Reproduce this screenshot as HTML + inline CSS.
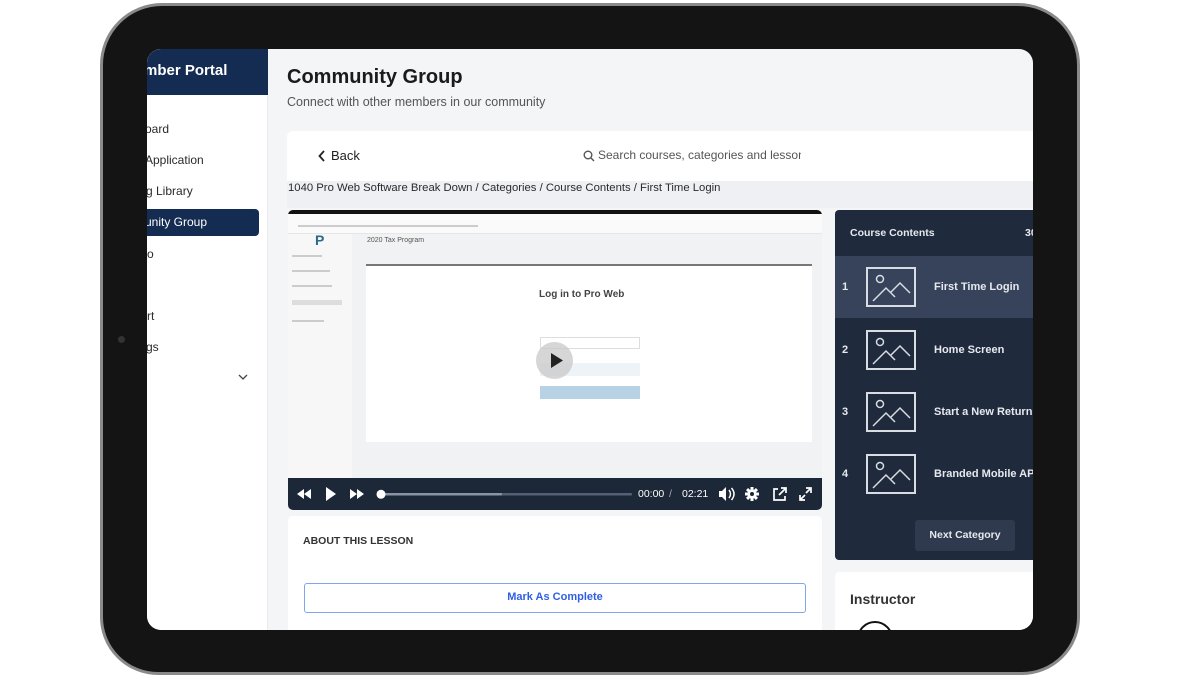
<!DOCTYPE html>
<html><head><meta charset="utf-8"><style>
*{margin:0;padding:0;box-sizing:border-box}
body{width:1200px;height:675px;background:#fff;position:relative;overflow:hidden;font-family:"Liberation Sans",Arial,sans-serif}
.a{position:absolute}
.frame{left:100px;top:3px;width:980px;height:672px;background:#141414;border:3px solid #8a8a8a;border-radius:62px 62px 58px 58px}
.screen{left:147px;top:49px;width:886px;height:581px;border-radius:14px;overflow:hidden;background:#f4f5f7}
.t{position:absolute;white-space:nowrap}
.nav{font-size:12px;color:#2a2a2a}
.th{position:absolute;left:31px;width:50px;height:40px;border:2px solid #d8dce3}
.row .n{position:absolute;left:7px;font-size:11px;color:#e6e9ee;font-weight:bold}
.row .l{position:absolute;left:99px;font-size:11px;color:#e6e9ee;font-weight:bold;white-space:nowrap}
</style></head><body>
<div class="a frame"></div>
<div class="a" style="left:118px;top:336px;width:7px;height:7px;border-radius:50%;background:#333"></div>
<div class="a screen">
  <div class="a" style="left:0;top:0;width:121px;height:581px;background:#fff;border-right:1px solid #e8eaee"></div>
  <div class="a" style="left:0;top:0;width:121px;height:46px;background:#142c52"></div>
  <div class="t" style="left:-3px;top:13px;color:#fff;font-size:15px;font-weight:bold">mber Portal</div>
  <div class="t nav" style="left:-2px;top:73px">oard</div>
  <div class="t nav" style="left:-2px;top:104px">Application</div>
  <div class="t nav" style="left:-1px;top:135px">g Library</div>
  <div class="a" style="left:0;top:160px;width:112px;height:27px;background:#142c52;border-radius:0 4px 4px 0"></div>
  <div class="t nav" style="left:-2px;top:166px;color:#fff">unity Group</div>
  <div class="t nav" style="left:0;top:198px">o</div>
  <div class="t nav" style="left:0;top:260px">rt</div>
  <div class="t nav" style="left:-1px;top:291px">gs</div>
  <svg class="a" style="left:91px;top:325px" width="10" height="7"><path d="M1 1l4 4 4-4" stroke="#444" stroke-width="1.3" fill="none"/></svg>
  <div class="t" style="left:140px;top:17px;font-size:20px;font-weight:bold;color:#1b1b1b">Community Group</div>
  <div class="t" style="left:140px;top:46px;font-size:12.5px;color:#555">Connect with other members in our community</div>
  <div class="a" style="left:140px;top:82px;width:760px;height:50px;background:#fff;border-radius:6px 0 0 0"></div>
  <svg class="a" style="left:171px;top:101px" width="8" height="12"><path d="M6 1L1.5 6 6 11" stroke="#222" stroke-width="1.8" fill="none"/></svg>
  <div class="t" style="left:184px;top:99px;font-size:13px;color:#222">Back</div>
  <svg class="a" style="left:436px;top:101px" width="12" height="12"><circle cx="5" cy="5" r="3.8" stroke="#555" stroke-width="1.4" fill="none"/><path d="M8 8l3 3" stroke="#555" stroke-width="1.4"/></svg>
  <div class="a" style="left:451px;top:99px;width:203px;height:16px;overflow:hidden"><span class="t" style="left:0;top:0;font-size:12px;color:#555">Search courses, categories and lessons</span></div>
  <div class="a" style="left:140px;top:132px;width:746px;height:27px;background:#eef0f3"></div>
  <div class="t" style="left:141px;top:133px;font-size:11.3px;color:#2a2a2a">1040 Pro Web Software Break Down / Categories / Course Contents / First Time Login</div>
  <div class="a" style="left:141px;top:161px;width:534px;height:300px;background:#f1f2f3;border-radius:5px;overflow:hidden">
    <div class="a" style="left:0;top:0;width:534px;height:4px;background:#111"></div>
    <div class="a" style="left:0;top:4px;width:534px;height:20px;background:#fafafa;border-bottom:1px solid #e6e6e6"></div>
    <div class="a" style="left:10px;top:15px;width:180px;height:2px;background:#ccc"></div>
    <div class="a" style="left:0;top:24px;width:64px;height:244px;background:#f7f7f7"></div>
    <div class="a" style="left:4px;top:45px;width:30px;height:2px;background:#ccc"></div>
    <div class="a" style="left:4px;top:60px;width:38px;height:2px;background:#ccc"></div>
    <div class="a" style="left:4px;top:75px;width:40px;height:2px;background:#ccc"></div>
    <div class="a" style="left:4px;top:90px;width:50px;height:5px;background:#ddd"></div>
    <div class="a" style="left:4px;top:110px;width:32px;height:2px;background:#ccc"></div>
    <div class="t" style="left:27px;top:22px;color:#2a6a8a;font-size:14px;font-weight:bold">P</div>
    <div class="t" style="left:79px;top:27px;font-size:7px;color:#555">2020 Tax Program</div>
    <div class="a" style="left:78px;top:54px;width:446px;height:2px;background:#777"></div>
    <div class="a" style="left:78px;top:56px;width:446px;height:176px;background:#fff"></div>
    <div class="t" style="left:251px;top:79px;font-size:10px;font-weight:bold;color:#444">Log in to Pro Web</div>
    <div class="a" style="left:252px;top:127px;width:100px;height:12px;border:1px solid #ddd"></div>
    <div class="a" style="left:252px;top:153px;width:100px;height:13px;background:#eef3f8"></div>
    <div class="a" style="left:252px;top:176px;width:100px;height:13px;background:#b7d2e4"></div>
    <div class="a" style="left:248px;top:132px;width:37px;height:37px;border-radius:50%;background:rgba(200,200,200,.75)"></div>
    <svg class="a" style="left:262px;top:142px" width="14" height="17"><path d="M1 1L13 8.5 1 16z" fill="#222"/></svg>
    <div class="a" style="left:0;top:268px;width:534px;height:32px;background:#1c2738"></div>
    <svg class="a" style="left:0;top:268px" width="534" height="32">
      <path d="M16 16l7-5v10zM9 16l7-5v10z" fill="#fff"/>
      <path d="M38 9l10 7-10 7z" fill="#fff"/>
      <path d="M62 11l7 5-7 5zM69 11l7 5-7 5z" fill="#fff"/>
      <rect x="92" y="15" width="252" height="2.5" rx="1" fill="#556075"/>
      <rect x="92" y="15" width="122" height="2.5" rx="1" fill="#8a93a3"/>
      <circle cx="93" cy="16.3" r="4.5" fill="#fff"/>
      <path d="M431 13h3l4-4v14l-4-4h-3z" fill="#fff"/><path d="M441 12q3 4 0 8M443.5 10q5 6 0 12" stroke="#fff" stroke-width="1.5" fill="none"/>
      <g transform="translate(464 16)" fill="#fff"><circle r="4.6"/><rect x="-1.5" y="-7" width="3" height="14"/><rect x="-1.5" y="-7" width="3" height="14" transform="rotate(45)"/><rect x="-1.5" y="-7" width="3" height="14" transform="rotate(90)"/><rect x="-1.5" y="-7" width="3" height="14" transform="rotate(135)"/><circle r="2" fill="#1c2738"/></g>
      <path d="M490 11h-4v11h11v-4M493 10h5v5M498 10l-7 7" stroke="#fff" stroke-width="1.7" fill="none"/>
      <path d="M518 10h5v5M523 10l-5 5M512 17v5h5M512 22l5-5" stroke="#fff" stroke-width="1.7" fill="none"/>
    </svg>
    <div class="t" style="left:350px;top:278px;font-size:10.5px;color:#fff">00:00</div>
    <div class="t" style="left:381px;top:278px;font-size:10.5px;color:#aaa">/</div>
    <div class="t" style="left:394px;top:278px;font-size:10.5px;color:#fff">02:21</div>
  </div>
  <div class="a" style="left:141px;top:467px;width:534px;height:120px;background:#fff;border-radius:5px"></div>
  <div class="t" style="left:156px;top:486px;font-size:10.5px;font-weight:bold;color:#333">ABOUT THIS LESSON</div>
  <div class="a" style="left:157px;top:534px;width:502px;height:30px;border:1px solid #80a5ef;border-radius:3px"></div>
  <div class="t" style="left:157px;top:542px;width:502px;text-align:center;font-size:11px;font-weight:bold;color:#2f5fe0">Mark As Complete</div>
  <div class="a" style="left:688px;top:161px;width:198px;height:350px;background:#1f2a3c;border-radius:4px 0 0 4px"></div>
  <div class="t" style="left:703px;top:178px;font-size:10.5px;font-weight:bold;color:#e6e9ee">Course Contents</div>
  <div class="t" style="left:878px;top:178px;font-size:10.5px;font-weight:bold;color:#e6e9ee">30</div>
  <div class="a" style="left:688px;top:207px;width:198px;height:62px;background:#36435a"></div>
  <div class="a row" style="left:688px;top:207px;width:198px;height:62px">
    <span class="n" style="top:25px">1</span><div class="th" style="top:11px"><svg width="46" height="36"><circle cx="12" cy="10" r="3.5" stroke="#d8dce3" stroke-width="1.5" fill="none"/><path d="M5 32l13-13 9 9M22 24l10-10 10 10" stroke="#d8dce3" stroke-width="1.5" fill="none"/></svg></div><span class="l" style="top:25px">First Time Login</span></div>
  <div class="a row" style="left:688px;top:269px;width:198px;height:62px">
    <span class="n" style="top:26px">2</span><div class="th" style="top:12px"><svg width="46" height="36"><circle cx="12" cy="10" r="3.5" stroke="#d8dce3" stroke-width="1.5" fill="none"/><path d="M5 32l13-13 9 9M22 24l10-10 10 10" stroke="#d8dce3" stroke-width="1.5" fill="none"/></svg></div><span class="l" style="top:26px">Home Screen</span></div>
  <div class="a row" style="left:688px;top:331px;width:198px;height:62px">
    <span class="n" style="top:26px">3</span><div class="th" style="top:12px"><svg width="46" height="36"><circle cx="12" cy="10" r="3.5" stroke="#d8dce3" stroke-width="1.5" fill="none"/><path d="M5 32l13-13 9 9M22 24l10-10 10 10" stroke="#d8dce3" stroke-width="1.5" fill="none"/></svg></div><span class="l" style="top:26px">Start a New Return</span></div>
  <div class="a row" style="left:688px;top:393px;width:198px;height:62px">
    <span class="n" style="top:26px">4</span><div class="th" style="top:12px"><svg width="46" height="36"><circle cx="12" cy="10" r="3.5" stroke="#d8dce3" stroke-width="1.5" fill="none"/><path d="M5 32l13-13 9 9M22 24l10-10 10 10" stroke="#d8dce3" stroke-width="1.5" fill="none"/></svg></div><span class="l" style="top:26px">Branded Mobile APP</span></div>
  <div class="a" style="left:768px;top:471px;width:100px;height:31px;background:#2f3a4f;border-radius:3px"></div>
  <div class="t" style="left:768px;top:480px;width:100px;text-align:center;font-size:10.5px;font-weight:bold;color:#e6e9ee">Next Category</div>
  <div class="a" style="left:688px;top:523px;width:198px;height:60px;background:#fff;border-radius:4px 0 0 0"></div>
  <div class="t" style="left:703px;top:542px;font-size:14px;font-weight:bold;color:#333">Instructor</div>
  <div class="a" style="left:710px;top:572px;width:36px;height:36px;border-radius:50%;border:2px solid #111"></div>
</div>
</body></html>
